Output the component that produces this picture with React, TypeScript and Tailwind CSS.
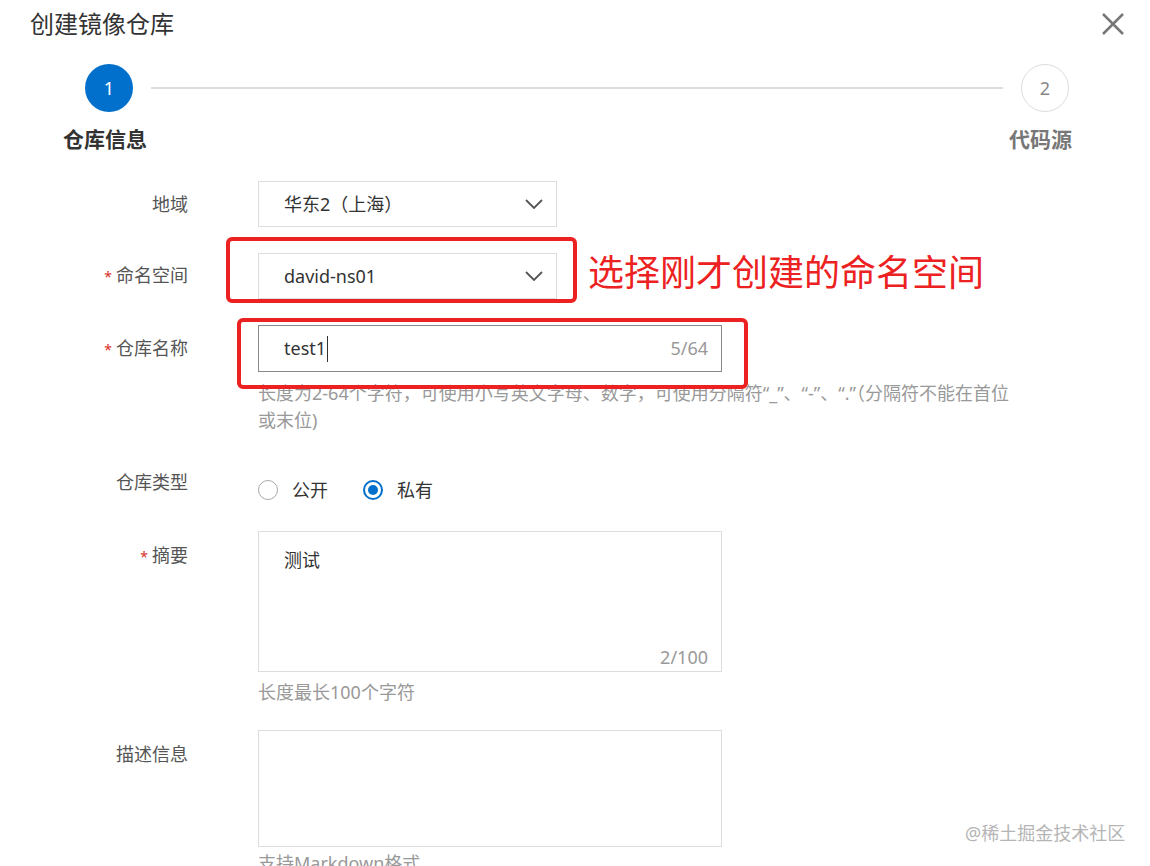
import React from "react";

const font = "font-['Noto_Sans','Noto_Sans_CJK_SC',sans-serif]";

function Label({ text, required }: { text: string; required?: boolean }) {
  return (
    <div className="w-[188px] shrink-0 text-right text-[18px] leading-[28px] text-[#555]">
      {required && <span className="mr-[4px] text-[14px] text-[#d93026]">*</span>}
      {text}
    </div>
  );
}

function Chevron() {
  return (
    <svg width="18" height="10" viewBox="0 0 18 10" fill="none">
      <path d="M1 1l8 8 8-8" stroke="#555" strokeWidth="1.8" />
    </svg>
  );
}

function Select({ value }: { value: string }) {
  return (
    <div className="flex h-[46px] w-[299px] items-center justify-between border border-[#ddd] pl-[25px] pr-[13px] text-[18px] text-[#333]">
      <span>{value}</span>
      <Chevron />
    </div>
  );
}

function Radio({ checked, text }: { checked?: boolean; text: string }) {
  return (
    <div className="flex items-center">
      <span
        className={
          checked
            ? "flex h-[20px] w-[20px] items-center justify-center rounded-full border-2 border-[#0070cc]"
            : "h-[20px] w-[20px] rounded-full border border-[#aaa]"
        }
      >
        {checked && <span className="h-[10px] w-[10px] rounded-full bg-[#0070cc]" />}
      </span>
      <span className="ml-[14px] text-[18px] text-[#333]">{text}</span>
    </div>
  );
}

export default function App() {
  return (
    <div className={`relative h-[866px] w-full overflow-hidden bg-white ${font}`}>
      {/* header */}
      <div className="flex items-center justify-between pl-[30px] pr-[26px] pt-[8px]">
        <h1 className="text-[24px] leading-[32px] text-[#333]">创建镜像仓库</h1>
        <svg width="22" height="22" viewBox="0 0 22 22">
          <path d="M1 1l20 20M21 1L1 21" stroke="#777" strokeWidth="2.5" />
        </svg>
      </div>

      {/* steps */}
      <div className="mt-[24px] flex items-center pl-[85px] pr-[81px]">
        <div className="flex h-[48px] w-[48px] items-center justify-center rounded-full bg-[#0070cc] text-[18px] text-white">
          1
        </div>
        <div className="mx-[18px] h-[2px] flex-1 bg-[#ddd]" />
        <div className="flex h-[48px] w-[48px] items-center justify-center rounded-full border border-[#ddd] text-[18px] text-[#888]">
          2
        </div>
      </div>
      <div className="mt-[13px] flex justify-between pl-[63px] pr-[78px] text-[21px] font-bold leading-[28px]">
        <span className="text-[#333]">仓库信息</span>
        <span className="text-[#777]">代码源</span>
      </div>

      {/* form */}
      <div className="mt-[28px] flex flex-col">
        <div className="flex items-center">
          <Label text="地域" />
          <div className="ml-[70px]">
            <Select value="华东2（上海）" />
          </div>
        </div>

        <div className="mt-[26px] flex items-center">
          <Label text="命名空间" required />
          <div className="ml-[70px]">
            <Select value="david-ns01" />
          </div>
        </div>

        <div className="mt-[26px] flex items-center">
          <Label text="仓库名称" required />
          <div className="ml-[70px] flex h-[47px] w-[464px] items-center justify-between border border-[#8a8a8a] pl-[25px] pr-[13px] text-[18px]">
            <span className="flex items-center text-[#333]">
              test1
              <span className="ml-[1px] h-[26px] w-[1px] bg-[#333]" />
            </span>
            <span className="text-[#999]">5/64</span>
          </div>
        </div>
        <div className="ml-[258px] mt-[8px] text-[18px] leading-[27px] text-[#999]">
          长度为2-64个字符，可使用小写英文字母、数字，可使用分隔符“_”、“-”、“.”（分隔符不能在首位
          <br />
          或末位)
        </div>

        <div className="mt-[34px] flex items-start">
          <Label text="仓库类型" />
          <div className="ml-[70px] mt-[8px] flex h-[28px] items-center gap-[35px]">
            <Radio text="公开" />
            <Radio text="私有" checked />
          </div>
        </div>

        <div className="mt-[27px] flex items-start">
          <div className="pt-[10px]">
            <Label text="摘要" required />
          </div>
          <div className="relative ml-[70px] h-[141px] w-[464px] border border-[#ddd] pl-[25px] pt-[14px] text-[18px] leading-[28px] text-[#333]">
            测试
            <span className="absolute bottom-0 right-[13px] text-[#999]">2/100</span>
          </div>
        </div>
        <div className="ml-[258px] mt-[6px] text-[18px] leading-[28px] text-[#999]">长度最长100个字符</div>

        <div className="mt-[24px] flex items-start">
          <div className="pt-[10px]">
            <Label text="描述信息" />
          </div>
          <div className="ml-[70px] h-[117px] w-[464px] border border-[#ddd]" />
        </div>
        <div className="ml-[258px] mt-[2px] text-[18px] leading-[28px] text-[#999]">支持Markdown格式</div>
      </div>

      {/* annotations */}
      <div className="absolute left-[226px] top-[237px] h-[66px] w-[351px] rounded-[6px] border-[4px] border-[#ec2222]" />
      <div className="absolute left-[588px] top-[251px] text-[36px] leading-[44px] text-[#ec2222]">
        选择刚才创建的命名空间
      </div>
      <div className="absolute left-[237px] top-[318px] h-[71px] w-[511px] rounded-[6px] border-[4px] border-[#ec2222]" />

      <div className="absolute left-[965px] top-[819px] text-[18px] leading-[28px] text-[#b5b5b5]">@稀土掘金技术社区</div>
    </div>
  );
}
